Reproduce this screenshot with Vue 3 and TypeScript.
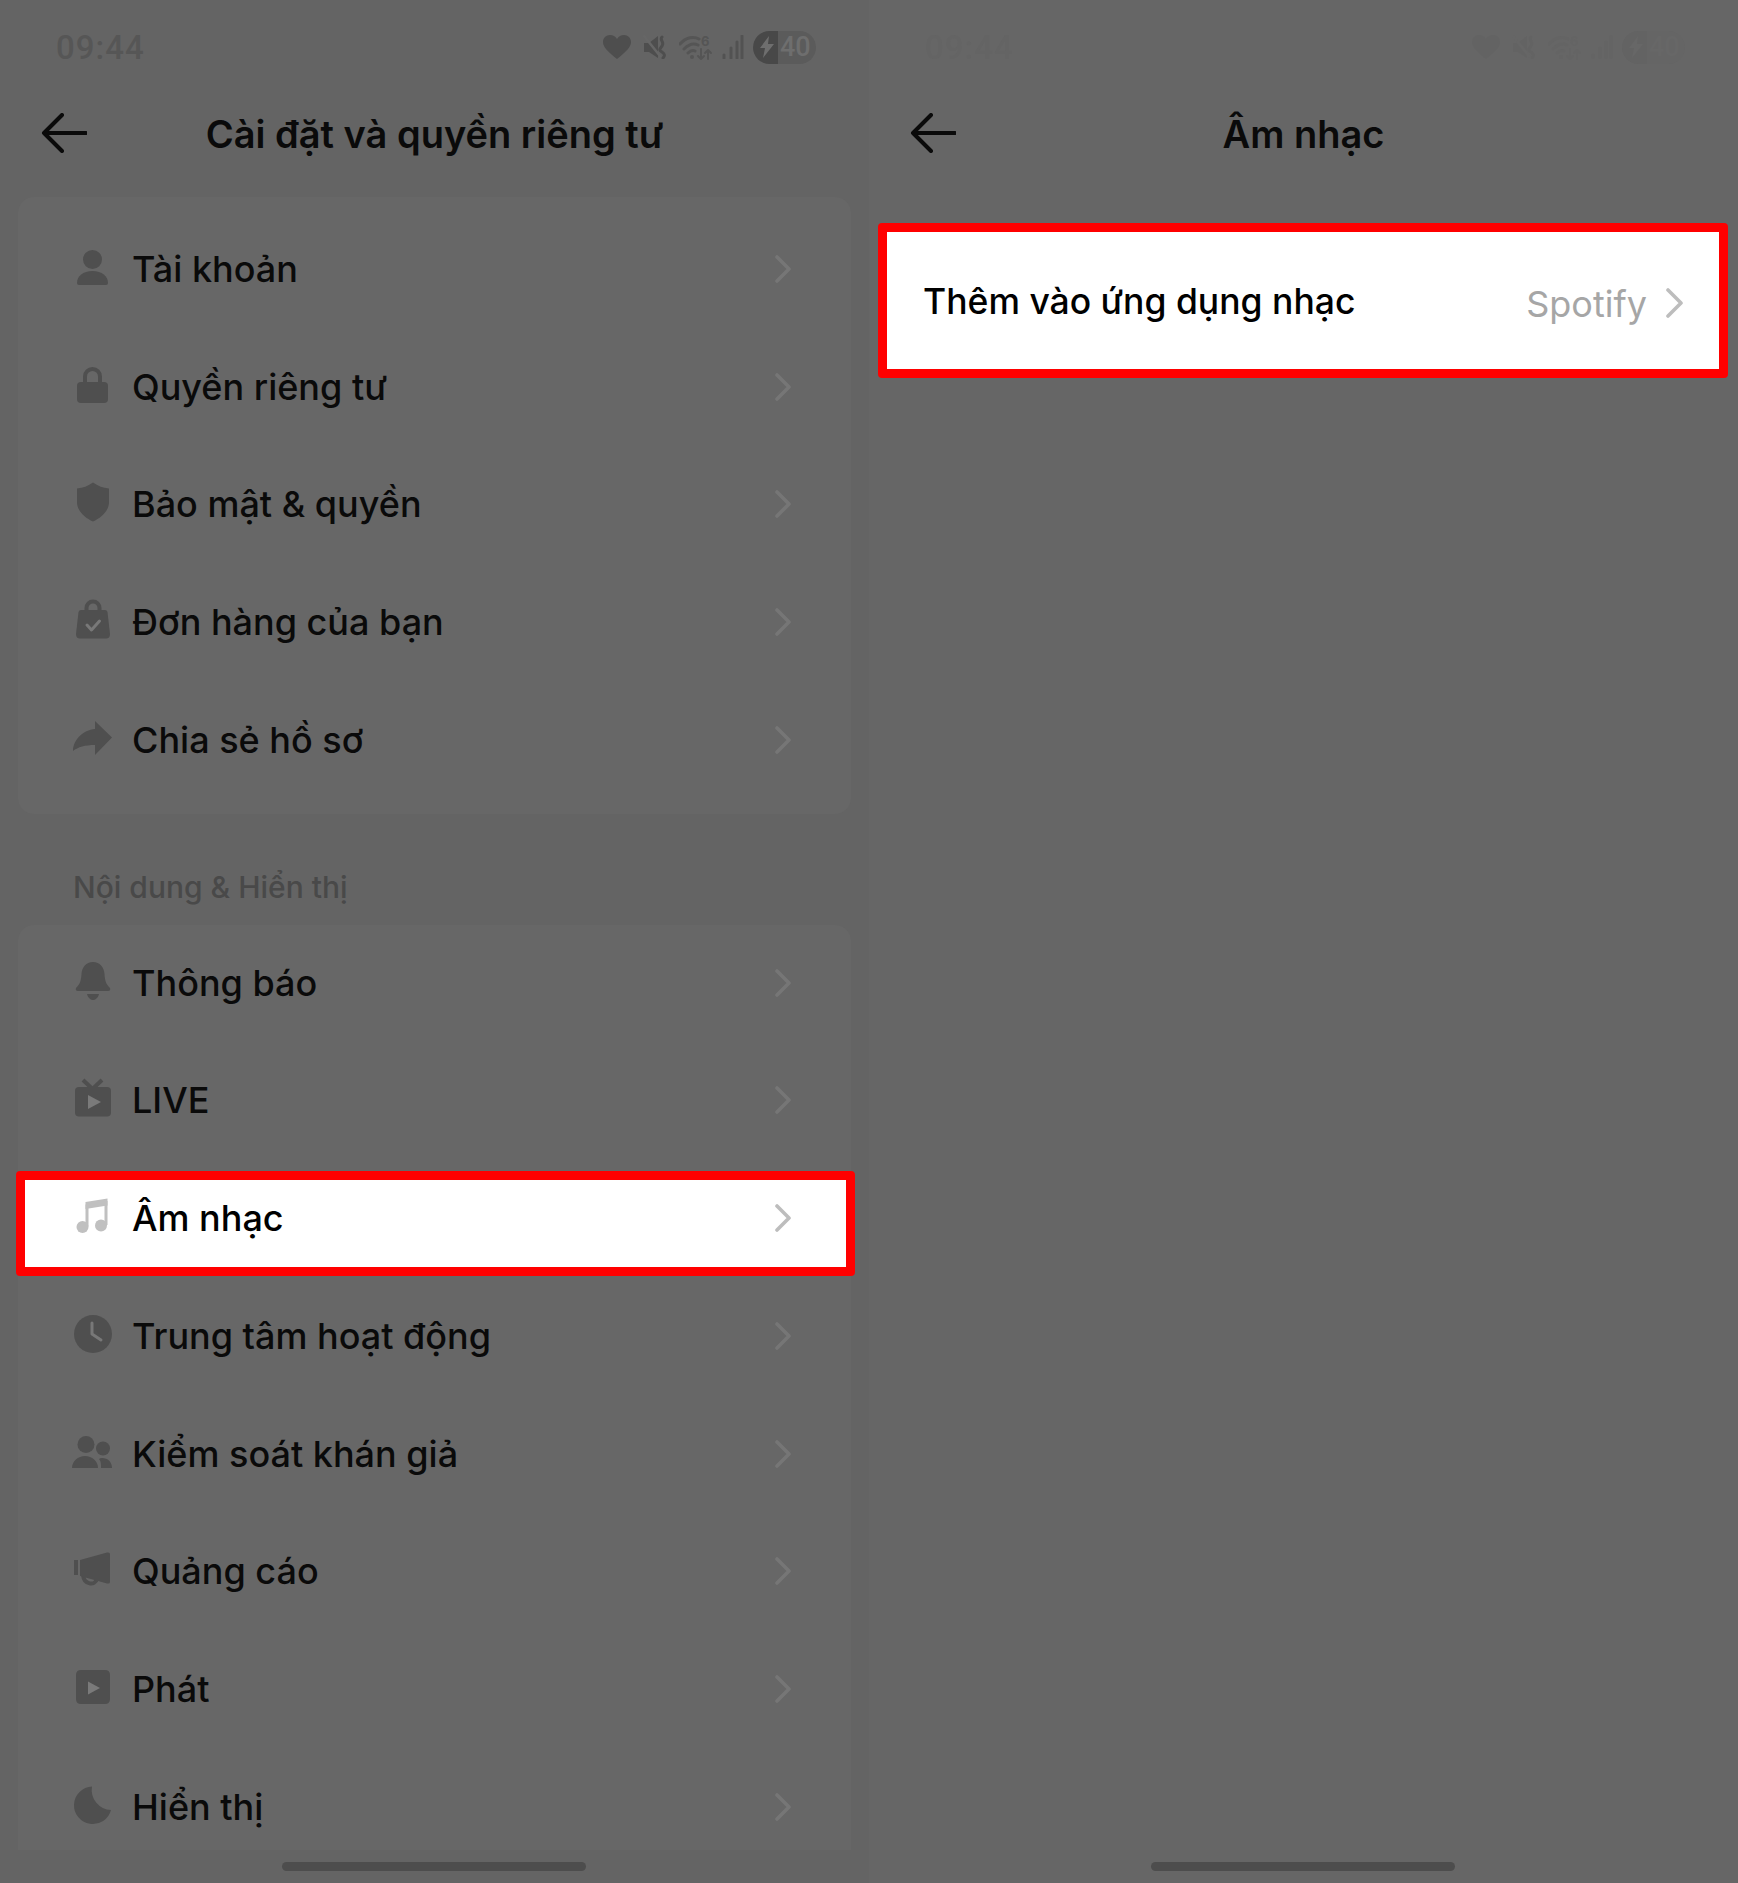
<script setup lang="ts">
type Shape = { d: string; k: string }

const circle = (cx: number, cy: number, r: number) =>
  `M${cx - r} ${cy}a${r} ${r} 0 1 0 ${2 * r} 0a${r} ${r} 0 1 0 ${-2 * r} 0Z`

const icons: Record<string, Shape[]> = {
  person: [
    { d: circle(24.5, 16.5, 9.5), k: 'f' },
    { d: 'M9 40C9 33 15 28 24.5 28S40 33 40 40Q40 42 38 42H11Q9 42 9 40Z', k: 'f' },
  ],
  lock: [
    { d: 'M17 22V15.5a7.5 7.5 0 0 1 15 0V22', k: 's' },
    { d: 'M13 21H36Q40 21 40 25V38Q40 42 36 42H13Q9 42 9 38V25Q9 21 13 21Z', k: 'f' },
  ],
  shield: [{ d: 'M25 4.5C30 8 35 10 41 10.5V24C41 33 33 40 25 43.5C17 40 9 33 9 24V10.5C15 10 20 8 25 4.5Z', k: 'f' }],
  bag: [
    { d: 'M18.5 16V12a6.5 6.5 0 0 1 13 0V16', k: 's' },
    { d: 'M13 14H37Q39 14 39.5 16L42 38Q42 42.5 38 42.5H12Q8 42.5 8 38L10.5 16Q11 14 13 14Z', k: 'f' },
    { d: 'M19 29L23.5 34L31.5 25', k: 'a' },
  ],
  share: [{ d: 'M27 7L44 23.5L27 41V31C17 31 10 33 5 37C5 26 15 16 27 15Z', k: 'f' }],
  bell: [
    { d: 'M25 5C32 5 36 10 36.5 17C37 24 38 27 42 31Q43 34 40 34H10Q7 34 8 31C12 27 13 24 13.5 17C14 10 18 5 25 5Z', k: 'f' },
    { d: 'M19 37H31C30 41 27 43 25 43C23 43 20 41 19 37Z', k: 'f' },
  ],
  tv: [
    { d: 'M15 6L24.5 15L34 6', k: 's' },
    { d: 'M11 13H39Q43 13 43 17V38.5Q43 42.5 39 42.5H11Q7 42.5 7 38.5V17Q7 13 11 13Z', k: 'f' },
    { d: 'M20 21L33 28L20 35Z', k: 'af' },
  ],
  note: [
    { d: circle(14.5, 35, 6), k: 'f' },
    { d: circle(33, 33.5, 6), k: 'f' },
    { d: 'M19 34.5V12.5M38 33V9', k: 's3' },
    { d: 'M17.5 10L39.5 6.5V13.5L17.5 17Z', k: 'f' },
  ],
  clock: [
    { d: circle(25, 24, 19), k: 'f' },
    { d: 'M24 13V24L33 30', k: 'a' },
  ],
  people: [
    { d: circle(18, 16.5, 8.5), k: 'f' },
    { d: 'M4 40C4 33 10 28 17 28S30 33 30 40Z', k: 'f' },
    { d: circle(35, 20.5, 7), k: 'f' },
    { d: 'M34 30C40 30 44 34 44 40H33C33 36 33 33 31 31Q32 30 34 30Z', k: 'f' },
  ],
  megaphone: [
    { d: 'M15 30C16 40 27 41 29 34', k: 's' },
    { d: 'M6 15H10V30H6ZM12 15L39 7.5Q42 7 42 9V37Q42 39 39 38.5L12 31Z', k: 'f' },
  ],
  play: [
    { d: 'M13 7H37Q42 7 42 12V36Q42 41 37 41H13Q8 41 8 36V12Q8 7 13 7Z', k: 'f' },
    { d: 'M20 18.5L32 25L20 31.5Z', k: 'af' },
  ],
  moon: [{ d: 'M24 5.5A18.8 18.8 0 1 0 43 29A20 20 0 0 1 24 5.5Z', k: 'f' }],
}

const accountRows = [
  { label: 'Tài khoản', icon: 'person' },
  { label: 'Quyền riêng tư', icon: 'lock' },
  { label: 'Bảo mật & quyền', icon: 'shield' },
  { label: 'Đơn hàng của bạn', icon: 'bag' },
  { label: 'Chia sẻ hồ sơ', icon: 'share' },
]

const contentRows = [
  { label: 'Thông báo', icon: 'bell' },
  { label: 'LIVE', icon: 'tv' },
  { label: 'Âm nhạc', icon: 'note', active: true },
  { label: 'Trung tâm hoạt động', icon: 'clock' },
  { label: 'Kiểm soát khán giả', icon: 'people' },
  { label: 'Quảng cáo', icon: 'megaphone' },
  { label: 'Phát', icon: 'play' },
  { label: 'Hiển thị', icon: 'moon' },
]

const panels = [{ faint: false }, { faint: true }]
</script>

<template>
  <div class="screen">
    <section v-for="(panel, p) in panels" :key="p" class="panel">
      <div class="status" :class="{ faint: panel.faint }">
        <span class="time">09:44</span>
        <div class="status-icons">
          <svg width="28" height="24" viewBox="0 0 28 24"><path d="M14 24C5 17 0 12 0 7C0 3 3 0 7 0C10 0 12.500 1.500 14 4C15.500 1.500 18 0 21 0C25 0 28 3 28 7C28 12 23 17 14 24Z" /></svg>
          <svg class="mute" width="24" height="24" viewBox="0 0 24 24">
            <path d="M1 8H6L15 1V23L6 17H1Z" />
            <path class="line gap" d="M1 1L17 21" />
            <path class="line" d="M19 2C16 5 22 7 19 11S16 15 19 17S22 21 20 23" />
          </svg>
          <svg class="wifi" width="34" height="30" viewBox="0 -2 34 30">
            <path class="line" d="M1 10C7 3 15 2 20 5M5 15C10 10 15 9 19 11M9 19C11 17 14 16 16 17" />
            <circle cx="13" cy="23" r="2" />
            <text x="22" y="12" class="six">6</text>
            <path class="line thin" d="M22 15V25M19 22L22 25L25 22M29 25V16M26 19L29 16L32 19" />
          </svg>
          <svg class="signal" width="22" height="24" viewBox="0 0 22 24">
            <path class="line" d="M2 20V23M9 13V23M15 7V23M20 1V23" />
          </svg>
          <div class="battery">
            <div class="bolt-side">
              <svg width="14" height="22" viewBox="0 0 14 22"><path d="M9 0L0 12H5L3 22L14 8H8Z" /></svg>
            </div>
            <div class="level-side"><span>40</span></div>
          </div>
        </div>
      </div>

      <header class="header">
        <svg class="back" width="46" height="40" viewBox="0 0 46 40">
          <path d="M45 20H3M21 2L3 20L21 38" />
        </svg>
        <h1 class="title">{{ p === 0 ? 'Cài đặt và quyền riêng tư' : 'Âm nhạc' }}</h1>
        <span></span>
      </header>

      <template v-if="p === 0">
        <div class="card account">
          <div v-for="row in accountRows" :key="row.label" class="row">
            <svg class="icon" width="48" height="48" viewBox="0 0 48 48">
              <path v-for="(s, i) in icons[row.icon]" :key="i" :d="s.d" :class="s.k" />
            </svg>
            <span class="label">{{ row.label }}</span>
            <svg class="chev" width="16" height="28" viewBox="0 0 16 28"><path d="M2 2L14 14L2 26" /></svg>
          </div>
        </div>

        <p class="section">Nội dung &amp; Hiển thị</p>

        <div class="card content">
          <div v-for="row in contentRows" :key="row.label" class="row" :class="{ active: row.active }">
            <div v-if="row.active" class="mark"></div>
            <svg class="icon" width="48" height="48" viewBox="0 0 48 48">
              <path v-for="(s, i) in icons[row.icon]" :key="i" :d="s.d" :class="s.k" />
            </svg>
            <span class="label">{{ row.label }}</span>
            <svg class="chev" width="16" height="28" viewBox="0 0 16 28"><path d="M2 2L14 14L2 26" /></svg>
          </div>
        </div>
      </template>

      <div v-else class="music-link">
        <span class="label">Thêm vào ứng dụng nhạc</span>
        <span class="value">Spotify</span>
        <svg class="chev" width="18" height="30" viewBox="0 0 18 30"><path d="M2 2L15 15L2 28" /></svg>
      </div>

      <div class="home-bar"></div>
    </section>
  </div>
</template>

<style>
html,
body {
  margin: 0;
  background: #666666;
}
</style>

<style scoped>
.screen {
  display: flex;
  width: 1738px;
  height: 1883px;
  overflow: hidden;
  font-family: Inter, "Noto Sans", sans-serif;
  color: #0a0a0a;
}

.panel {
  position: relative;
  width: 869px;
  height: 1883px;
  display: flex;
  flex-direction: column;
  background: #646464;
}

.panel + .panel {
  background: #666666;
}

.status {
  height: 94px;
  display: flex;
  align-items: center;
  justify-content: space-between;
  padding: 0 53px 0 56px;
  box-sizing: border-box;
  color: #4e4e4e;
}

.status.faint {
  opacity: 0.1;
}

.time {
  font-family: Roboto, sans-serif;
  font-size: 33px;
  font-weight: 500;
  letter-spacing: 1px;
  color: #565656;
}

.status-icons {
  display: flex;
  align-items: center;
  gap: 12px;
}

.status-icons svg {
  fill: currentColor;
  display: block;
}

.line {
  fill: none;
  stroke: currentColor;
  stroke-width: 3;
  stroke-linecap: round;
  stroke-linejoin: round;
}

.line.thin {
  stroke-width: 2;
}

.line.gap {
  stroke: #666666;
  stroke-width: 2.500;
}

.six {
  font-size: 13px;
  font-weight: 700;
}

.wifi {
  color: #555555;
}

.signal {
  color: #525252;
  margin-left: -3px;
}

.battery {
  display: flex;
  width: 63px;
  height: 33px;
  border-radius: 17px;
  overflow: hidden;
  margin-left: -3px;
}

.bolt-side {
  width: 25px;
  background: #484848;
  display: flex;
  align-items: center;
  justify-content: center;
  padding-left: 3px;
  box-sizing: border-box;
}

.bolt-side svg {
  fill: #6e6e6e !important;
}

.level-side {
  flex: 1;
  background: #5b5b5b;
  font-family: Roboto, sans-serif;
  font-size: 27px;
  font-weight: 500;
  line-height: 33px;
  color: #6e6e6e;
  padding-left: 2px;
}

.header {
  height: 78px;
  display: grid;
  grid-template-columns: 1fr auto 1fr;
  align-items: center;
  padding: 0 41px;
  box-sizing: border-box;
}

.back {
  fill: none;
  stroke: #0a0a0a;
  stroke-width: 4;
  stroke-linecap: round;
  stroke-linejoin: round;
}

.title {
  margin: 0;
  font-size: 38px;
  font-weight: 600;
  line-height: 44px;
  padding-top: 1px;
}

.card {
  margin: 0 18px;
  background: #676767;
  border-radius: 16px;
}

.account {
  margin-top: 25px;
  padding: 14px 0;
}

.content {
  height: 925px;
  border-radius: 16px 16px 0 0;
}

.section {
  margin: 0;
  height: 111px;
  padding: 56px 0 0 73px;
  box-sizing: border-box;
  font-size: 30px;
  font-weight: 500;
  line-height: 34px;
  color: #494949;
}

.row {
  position: relative;
  height: 117.75px;
  display: flex;
  align-items: center;
  padding: 0 60px 0 50px;
  box-sizing: border-box;
  color: #4f4f4f;
}

.row > * {
  position: relative;
}

.row > .mark {
  position: absolute;
  top: 11px;
  bottom: 2px;
  left: -2px;
  right: -4px;
  background: #ffffff;
  border: 9px solid #ff0000;
  border-radius: 4px;
}

.icon {
  flex: none;
  margin-bottom: 6px;
}

.f {
  fill: currentColor;
}

.s,
.s3 {
  fill: none;
  stroke: currentColor;
  stroke-width: 4;
}

.s3 {
  stroke-width: 3;
}

.a {
  fill: none;
  stroke: #787878;
  stroke-width: 3;
  stroke-linecap: round;
  stroke-linejoin: round;
}

.af {
  fill: #7a7a7a;
}

.label {
  flex: 1;
  margin-left: 16px;
  margin-bottom: 2px;
  font-size: 36px;
  font-weight: 500;
  line-height: 44px;
  color: #0a0a0a;
}

.chev {
  flex: none;
  fill: none;
  stroke: #767676;
  stroke-width: 3.600;
  stroke-linecap: round;
  stroke-linejoin: round;
  margin-bottom: 2px;
}

.row.active {
  color: #c0c0c0;
}

.row.active .label {
  color: #000000;
}

.row.active .chev {
  stroke: #bdbdbd;
}

.music-link {
  margin: 51px 10px 0 9px;
  height: 155px;
  display: flex;
  align-items: center;
  padding: 0 35px 0 36px;
  box-sizing: border-box;
  background: #ffffff;
  border: 9px solid #ff0000;
  border-radius: 4px;
}

.music-link .label {
  margin-left: 0;
  margin-bottom: 0;
  font-size: 35.500px;
  color: #000000;
  margin-top: 2px;
}

.value {
  margin-right: 19px;
  font-size: 36px;
  font-weight: 400;
  line-height: 44px;
  color: #a6a6a6;
  margin-top: 6px;
}

.music-link .chev {
  stroke: #bdbdbd;
  margin-top: 4px;
  margin-bottom: 0;
}

.home-bar {
  position: absolute;
  left: 282px;
  bottom: 12px;
  width: 304px;
  height: 9px;
  border-radius: 5px;
  background: #4d4d4d;
}
</style>
